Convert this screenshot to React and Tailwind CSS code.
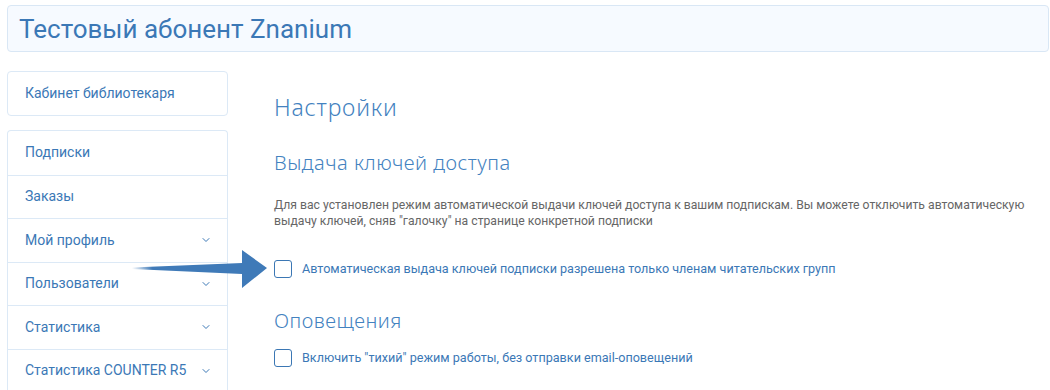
import { ChevronDown } from "lucide-react";

const menu = [
  { label: "Подписки" },
  { label: "Заказы" },
  { label: "Мой профиль", sub: true },
  { label: "Пользователи", sub: true },
  { label: "Статистика", sub: true },
  { label: "Статистика COUNTER R5", sub: true },
];

function Checkbox() {
  return <span className="block w-[18px] h-[18px] shrink-0 rounded-[3px] border border-[#3b77b4] bg-white" />;
}

export default function App() {
  return (
    <div className="relative w-[1050px] h-[390px] overflow-hidden bg-white font-['Roboto',sans-serif]">
      <div className="ml-[7px] mr-[1px] mt-[5px] h-[47px] flex items-center pl-[11px] rounded-[4px] border border-[#d9e7f5] bg-[#f6faff]">
        <h1 className="text-[26px] leading-none text-[#3b78b6]">Тестовый абонент Znanium</h1>
      </div>

      <div className="flex mt-[19px]">
        <aside className="ml-[7px] w-[221px] shrink-0">
          <div className="h-[45px] flex items-center px-[17px] rounded-[4px] border border-[#dce9f6] text-[14px] text-[#3b78b6]">
            Кабинет библиотекаря
          </div>
          <div className="mt-[14px] rounded-t-[4px] border border-[#dce9f6] border-b-0">
            {menu.map((m, i) => (
              <div
                key={m.label}
                className={
                  "h-[43.5px] flex items-center justify-between pl-[17px] pr-[15px] text-[14px] text-[#3b78b6] " +
                  (i > 0 ? "border-t border-[#dce9f6]" : "")
                }
              >
                <span>{m.label}</span>
                {m.sub && <ChevronDown size={12} strokeWidth={2} className="text-[#3b78b6]" />}
              </div>
            ))}
          </div>
        </aside>

        <main className="flex-1 ml-[46px] pt-[22px] pr-[6px] text-[#3b78b6]">
          <h2 className="text-[23px] leading-[28px] tracking-[0.8px] font-light text-[#4382c0] font-['Noto_Sans',sans-serif]">Настройки</h2>
          <h3 className="mt-[29px] text-[20px] leading-[26px] tracking-[0.5px] font-light text-[#4382c0] font-['Noto_Sans',sans-serif]">Выдача ключей доступа</h3>
          <p className="mt-[21px] text-[12.2px] leading-[16px] text-[#666]">
            Для вас установлен режим автоматической выдачи ключей доступа к вашим подпискам. Вы можете отключить автоматическую
            выдачу ключей, сняв "галочку" на странице конкретной подписки
          </p>
          <label className="mt-[31px] flex items-center gap-[10px] text-[12.6px]">
            <Checkbox />
            <span>Автоматическая выдача ключей подписки разрешена только членам читательских групп</span>
          </label>
          <h3 className="mt-[29px] text-[20px] leading-[26px] tracking-[0.5px] font-light text-[#4382c0] font-['Noto_Sans',sans-serif]">Оповещения</h3>
          <label className="mt-[15px] flex items-center gap-[10px] text-[12.6px]">
            <Checkbox />
            <span>Включить "тихий" режим работы, без отправки email-оповещений</span>
          </label>
        </main>
      </div>

      <svg className="absolute left-[130px] top-[248px]" width="140" height="42" viewBox="0 0 140 42">
        <defs>
          <linearGradient id="tail" x1="0" x2="1" y1="0" y2="0">
            <stop offset="0" stopColor="#3f7ab8" stopOpacity="0" />
            <stop offset="0.15" stopColor="#3f7ab8" stopOpacity="1" />
          </linearGradient>
        </defs>
        <path d="M2 19.5 L112 15 L112 2 L137 20 L112 40 L112 26 L2 21 Z" fill="url(#tail)" />
      </svg>
    </div>
  );
}
